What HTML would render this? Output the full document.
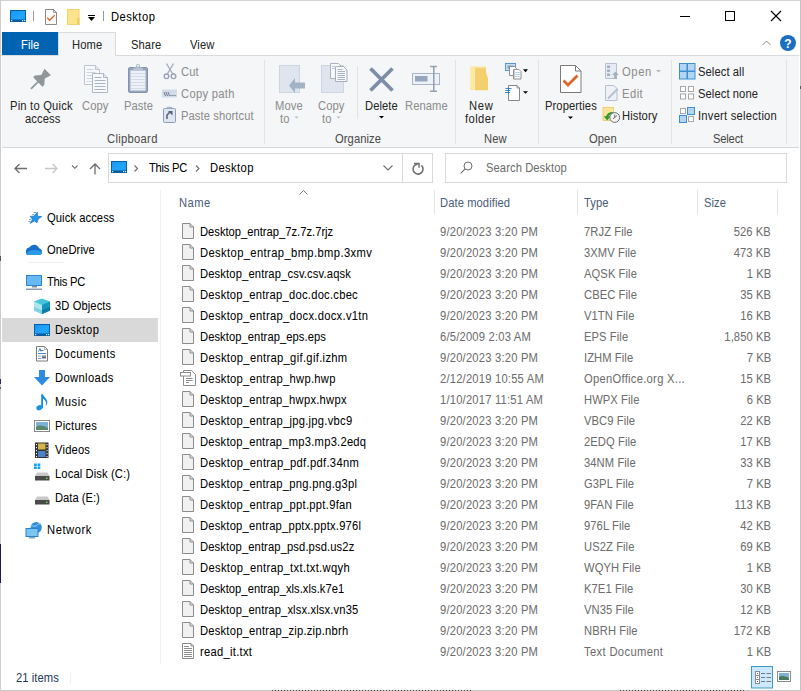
<!DOCTYPE html>
<html><head><meta charset="utf-8"><style>
*{margin:0;padding:0;box-sizing:border-box}
html,body{width:801px;height:691px;overflow:hidden;background:#fff}
body{position:relative;font-family:"Liberation Sans",sans-serif;font-size:12px;color:#000}
.a{position:absolute}
.t{position:absolute;white-space:nowrap;line-height:14px;letter-spacing:0.086px;transform:scaleX(0.933);transform-origin:0 0;-webkit-text-stroke:0.04px currentColor}
.t.r{transform-origin:100% 0}
.sep{position:absolute;width:1px;background:#e2e3e4}
</style></head><body>
<div class="a" style="left:0;top:0;width:801px;height:1px;background:#d3d3d3"></div>
<div class="a" style="left:0;top:0;width:1px;height:691px;background:#cdcdcd"></div>
<div class="a" style="left:800px;top:0;width:1px;height:691px;background:#c4c4c4"></div>
<div class="a" style="left:0;top:690px;width:801px;height:1px;background:#c8c8c8"></div>
<div class="a" style="left:2px;top:55px;width:797px;height:1px;background:#dadbdc"></div>
<div class="a" style="left:2px;top:32px;width:56px;height:23px;background:#0063b1"></div>
<div class="a" style="left:58px;top:32px;width:58px;height:24px;background:#f5f6f7;border:1px solid #dadbdc;border-bottom:none"></div>
<div class="a" style="left:2px;top:56px;width:797px;height:91px;background:#f5f6f7"></div>
<div class="a" style="left:2px;top:147px;width:797px;height:1px;background:#d5d6d7"></div>
<div class="sep" style="left:264px;top:60px;height:84px"></div>
<div class="sep" style="left:455px;top:60px;height:84px"></div>
<div class="sep" style="left:538px;top:60px;height:84px"></div>
<div class="sep" style="left:671px;top:60px;height:84px"></div>
<div class="sep" style="left:786px;top:60px;height:84px"></div>
<div class="sep" style="left:357px;top:66px;height:53px"></div>
<div class="a" style="left:108px;top:153px;width:325px;height:30px;border:1px solid #d9d9d9"></div>
<div class="a" style="left:402px;top:154px;width:1px;height:28px;background:#d9d9d9"></div>
<div class="a" style="left:445px;top:153px;width:342px;height:30px;border:1px solid #d9d9d9"></div>
<div class="a" style="left:160px;top:190px;width:1px;height:474px;background:#f0f0f0"></div>
<div class="a" style="left:2px;top:318px;width:156px;height:24px;background:#d9d9d9"></div>
<div class="sep" style="left:434px;top:190px;height:24px;background:#e5e5e5"></div>
<div class="sep" style="left:577px;top:190px;height:24px;background:#e5e5e5"></div>
<div class="sep" style="left:697px;top:190px;height:24px;background:#e5e5e5"></div>
<div class="sep" style="left:777px;top:190px;height:24px;background:#e5e5e5"></div>
<div class="sep" style="left:70px;top:672px;height:12px;background:#f0f0f0"></div>
<div class="a" style="left:0;top:256px;width:1px;height:5px;background:#555"></div>
<div class="a" style="left:0;top:379px;width:1px;height:5px;background:#2a2a6a"></div>
<div class="a" style="left:0;top:387px;width:1px;height:2px;background:#666"></div>
<div class="a" style="left:0;top:544px;width:1px;height:39px;background:#1c1c5a"></div>
<div class="a" style="left:800px;top:86px;width:1px;height:3px;background:#555"></div>
<div class="a" style="left:272px;top:690px;width:200px;height:1px;background:repeating-linear-gradient(90deg,#444 0 1px,#c8c8c8 1px 3px)"></div>
<div class="a" style="left:620px;top:690px;width:125px;height:1px;background:repeating-linear-gradient(90deg,#444 0 1px,#c8c8c8 1px 3px)"></div>
<div class="a" style="left:28px;top:262px;width:36px;height:1px;background:#f0f0f0"></div>
<svg class="a" style="left:0;top:0" width="801" height="691" viewBox="0 0 801 691">
<defs>
<linearGradient id="scr" x1="0" y1="0" x2="1" y2="1"><stop offset="0" stop-color="#1696ee"/><stop offset="0.6" stop-color="#22a6fc"/><stop offset="1" stop-color="#0d99fa"/></linearGradient>
<g id="pcico"><rect x="0.5" y="0.5" width="15" height="11" fill="url(#scr)" stroke="#0a5ea8" stroke-width="1"/><rect x="0.5" y="9.5" width="15" height="2" fill="#0b5a9e"/><rect x="1" y="10" width="1.2" height="1.2" fill="#c8ecff"/><rect x="12" y="10" width="1.2" height="1.2" fill="#c8ecff"/><rect x="14" y="10" width="1.2" height="1.2" fill="#c8ecff"/></g>
</defs>
<!-- title bar QAT -->
<use href="#pcico" x="10" y="10"/>
<rect x="33" y="11" width="1" height="10" fill="#9a9a9a"/>
<path d="M45.5 9.5h8l3 3v12h-11z" fill="#fafafa" stroke="#8a8a8a"/><path d="M53.5 9.5v3h3z" fill="#ddd" stroke="#8a8a8a" stroke-width="0.8"/><path d="M47.2 17.8l2.5 2.5 5-5.2" fill="none" stroke="#e0642a" stroke-width="1.3"/>
<rect x="67.5" y="9.5" width="11.5" height="15" fill="#fde38c" stroke="#f1d070"/><rect x="77" y="18" width="2.5" height="7" fill="#f0cd60"/>
<rect x="88" y="15" width="7" height="1" fill="#000"/><path d="M88 17h7l-3.5 4z" fill="#000"/>
<rect x="103" y="11" width="1" height="10" fill="#9a9a9a"/>
<!-- window controls -->
<rect x="680" y="16" width="10" height="1" fill="#000"/>
<rect x="725.5" y="11.5" width="9" height="9" fill="none" stroke="#000" stroke-width="1"/>
<path d="M771 11l10 10M781 11l-10 10" stroke="#000" stroke-width="1.1"/>
<!-- tab row right -->
<path d="M762.5 45l4-4 4 4" fill="none" stroke="#8a8a8a" stroke-width="1"/>
<circle cx="788" cy="43" r="8" fill="#1c6fc0"/>
<text x="788" y="47.5" font-family="Liberation Sans" font-weight="bold" font-size="12" fill="#fff" text-anchor="middle">?</text>
<!-- ribbon: pin -->
<g transform="translate(47.7,72.1) rotate(135)"><path d="M0-4.6V4.6L6.5 2.4 11.5 6.6 14 6.6V-6.6L11.5-6.6 6.5-2.4z" fill="#8f9799"/><path d="M13 0H23" stroke="#8f9799" stroke-width="1.7" stroke-linecap="round"/></g>
<!-- copy -->
<path d="M84.5 65.5h11l4 4v15h-15z" fill="#f7f9fc" stroke="#bcc4d1"/><path d="M95.5 65.5v4h4" fill="#e3e8f0" stroke="#bcc4d1"/>
<path d="M86.5 69.5h7M86.5 72.5h9M86.5 75.5h9M86.5 78.5h9M86.5 81.5h9" stroke="#cdd4df"/>
<path d="M92.5 73.5h11l4 4v15h-15z" fill="#f7f9fc" stroke="#aeb7c6"/><path d="M103.5 73.5v4h4" fill="#e3e8f0" stroke="#aeb7c6"/>
<path d="M94.5 77.5h7M94.5 80.5h11M94.5 83.5h11M94.5 86.5h11M94.5 89.5h11" stroke="#aab4c5"/>
<!-- paste -->
<rect x="128.5" y="67.5" width="19" height="25" rx="1.5" fill="#98a6bd" stroke="#8393ae"/>
<rect x="130.5" y="70.5" width="15" height="20" fill="#eef2f8"/>
<path d="M131 73.5h14M131 76.5h14M131 79.5h14M131 82.5h14M131 85.5h14M131 88.5h14" stroke="#d3dbe7"/>
<path d="M132.5 70.5l1.5-3h8l1.5 3z" fill="#b7c2d3"/><rect x="136" y="64" width="4" height="4" rx="1.5" fill="#b0bccd"/><rect x="137" y="65" width="2" height="1.5" fill="#eef2f8"/>
<!-- cut -->
<path d="M166.5 63.5l6.5 11M173.5 63.5l-6.5 11" stroke="#a0a9bc" stroke-width="1.3"/>
<circle cx="166.5" cy="76.3" r="2.3" fill="none" stroke="#9aa3b8" stroke-width="1.4"/><circle cx="173.5" cy="76.3" r="2.3" fill="none" stroke="#9aa3b8" stroke-width="1.4"/>
<!-- copy path -->
<rect x="162" y="89.5" width="15" height="8" fill="#d3dbea"/>
<path d="M164 92l1.5 4M166 92l1.5 4M168 92l1.5 4" stroke="#55607a" stroke-width="0.8"/><path d="M170.5 95.5h1M172.5 95.5h1M174.5 95.5h1" stroke="#55607a"/>
<!-- paste shortcut -->
<rect x="163.5" y="108.5" width="12" height="14" rx="1" fill="#dfe6f1" stroke="#8d9cb6"/>
<path d="M166 108.5l1.3-1.8h4.4l1.3 1.8" fill="#a8b5c9"/>
<path d="M167 119v-4l3.5-3.5" stroke="#55607a" stroke-width="1.5" fill="none"/><path d="M168 111h4.5v4.5z" fill="#55607a"/>
<!-- move to -->
<rect x="279.5" y="65.5" width="20" height="27" fill="#dfe5ee" stroke="#cdd5e1"/>
<path d="M289 85.5l6-7.5v4.5h10v6h-10v4.5z" fill="#a3b2c5"/>
<!-- copy to -->
<rect x="321.5" y="65.5" width="22" height="27" fill="#dfe5ee" stroke="#cdd5e1"/>
<path d="M330.5 63.5h8l3.5 3.5v11.5h-11.5z" fill="#f6f8fb" stroke="#aab3c3"/>
<path d="M335.5 66.5h8l3.5 3.5v11.5h-11.5z" fill="#f6f8fb" stroke="#a3aec0"/>
<path d="M337.5 69.5h5M337.5 71.5h7.5M337.5 73.5h7.5M337.5 75.5h7.5M337.5 77.5h7.5M337.5 79.5h7.5" stroke="#a9b4c5"/><path d="M332 66.5h5M332 68.5h3" stroke="#c0c8d4"/>
<!-- delete -->
<path d="M370.5 68.5l22 22M392.5 68.5l-22 22" stroke="#7d8ea8" stroke-width="3.8"/>
<!-- rename -->
<rect x="412.5" y="73.5" width="27" height="11" fill="#eef2f8" stroke="#a8b4c7"/>
<rect x="415" y="76" width="12.5" height="5.5" fill="#98a6bb"/>
<path d="M430 66.5h3l0.5 0.8 0.5-0.8h3M433.8 67v24M430 91.3h3l0.5-0.8 0.5 0.8h3" stroke="#96a3b4" stroke-width="1.6" fill="none"/>
<!-- new folder -->
<path d="M470 66.5h16v23.5h-16z" fill="#fbe39c"/>
<path d="M475 68.3l11 0v4l2 6v12h-13z" fill="#f3d06d"/>
<path d="M470 66.5l5 2v21.5l-5-1.5z" fill="#fde9a8"/>
<!-- new item -->
<rect x="505.5" y="63.5" width="10" height="7" fill="#c6dff3" stroke="#4a90cf" stroke-width="0.9"/>
<rect x="507.5" y="65.5" width="6" height="3" fill="#7aa3c0"/>
<path d="M509.5 66.5h5l2 2v7h-7z" fill="#fff" stroke="#858585" stroke-width="0.9"/>
<path d="M513.5 69.5h5.5l2 2v7.5h-7.5z" fill="#fff" stroke="#858585" stroke-width="0.9"/>
<path d="M515 72.5h5M515 74.5h5M515 76.5h5" stroke="#9fd0e6" stroke-width="0.8"/><path d="M514.5 70v8.5" stroke="#e2b5c5" stroke-width="0.8"/>
<path d="M523 69.2h5l-2.5 3z" fill="#000"/>
<!-- easy access -->
<path d="M508.5 85.5h8.5l2.5 2.5v12.5h-11z" fill="#fff" stroke="#7a7a7a" stroke-width="0.9"/>
<path d="M517 85.5v2.5h2.5" fill="none" stroke="#7a7a7a" stroke-width="0.8"/>
<path d="M505.5 88.5h6M505.3 90.5h5M505 92.5h5" stroke="#2a7bc7" stroke-width="0.9"/><path d="M508.5 87.5v6" stroke="#2a7bc7" stroke-width="0.8"/>
<path d="M523 91.2h5l-2.5 2.5z" fill="#000"/>
<!-- properties -->
<path d="M560.5 65.5h15l5.5 5.5v21.5h-20.5z" fill="#fff" stroke="#7a7a7a"/>
<path d="M575.5 65.5v5.5h5.5" fill="none" stroke="#7a7a7a"/>
<path d="M563.5 80.5l4.5 4.5 9.5-9.5" fill="none" stroke="#e0642a" stroke-width="2.8"/>
<path d="M568 116.5h5l-2.5 2.5z" fill="#000"/>
<!-- open -->
<path d="M605.5 63.5h11v15h-11z" fill="#e7ecf3" stroke="#b6c0cf"/>
<rect x="607" y="65.5" width="3" height="2.5" fill="#a5b1c3"/><rect x="607" y="69.5" width="3" height="2.5" fill="#a5b1c3"/><rect x="607" y="73.5" width="3" height="2.5" fill="#a5b1c3"/>
<path d="M612 75l3.5-3.5 3.5 3.5h-2v4h-3v-4z" fill="#a5b1c3"/>
<path d="M656 70h5l-2.5 2.5z" fill="#b8b8b8"/>
<!-- edit -->
<path d="M605.5 85.5h8.5l3 3v12h-11.5z" fill="#eef1f6" stroke="#b6c0cf"/>
<path d="M608 98.5l9.5-9.5" stroke="#b6c0cf" stroke-width="2"/>
<!-- history -->
<rect x="603" y="107.5" width="10.5" height="13" fill="#fbe39c" stroke="#e8c965" stroke-width="0.8"/>
<path d="M613 113.2C609.5 113 607.3 114.8 607.2 117.3" fill="none" stroke="#2e9a34" stroke-width="2.2"/><path d="M603.8 116.3h6.8l-3.4 4.2z" fill="#2e9a34"/>
<circle cx="614.7" cy="117.5" r="4.9" fill="#f3f3f3" stroke="#6d6d6d" stroke-width="1"/><path d="M614.7 114.5v3l-1.8 1.2M617 115.5l-2.3 2" stroke="#555" stroke-width="0.8" fill="none"/>
<!-- select all -->
<rect x="679.5" y="63.5" width="15.5" height="15.5" fill="#b4d5f2" stroke="#3a8fd6"/>
<path d="M687.25 63.5v15.5M679.5 71.25h15.5" stroke="#3a8fd6" stroke-width="1.5"/>
<!-- select none -->
<g fill="#fff" stroke="#a8a8a8"><rect x="680.5" y="86.5" width="5" height="5"/><rect x="688.5" y="86.5" width="5" height="5"/><rect x="680.5" y="94" width="5" height="5"/><rect x="688.5" y="94" width="5" height="5"/></g>
<!-- invert -->
<g fill="#fff" stroke="#a8a8a8"><rect x="680.5" y="108.5" width="5" height="5"/><rect x="688.5" y="116.5" width="5" height="5"/></g>
<g fill="#b4d5f2" stroke="#3a8fd6"><rect x="687.5" y="107.5" width="7" height="7"/><rect x="679.5" y="115.5" width="7" height="7"/></g>
<!-- dropdown arrows organize -->
<path d="M294.5 116.5h4l-2 2z" fill="#b8b8b8"/><path d="M336.5 116.5h4l-2 2z" fill="#b8b8b8"/>
<path d="M379 116h5l-2.5 2.5z" fill="#000"/>
<!-- address bar -->
<path d="M15 168.5h12M19.5 164l-4.5 4.5 4.5 4.5" fill="none" stroke="#6d6d6d" stroke-width="1.3"/>
<path d="M45 168.5h12M52.5 164l4.5 4.5-4.5 4.5" fill="none" stroke="#c8c8c8" stroke-width="1.3"/>
<path d="M72 165.5l2.8 2.8 2.8-2.8" fill="none" stroke="#6d6d6d" stroke-width="1.1"/>
<path d="M95 174.5v-10M90 169l5-5 5 5" fill="none" stroke="#6d6d6d" stroke-width="1.3"/>
<use href="#pcico" x="111" y="161"/>
<path d="M134.5 165.5l3 3-3 3" fill="none" stroke="#6d6d6d" stroke-width="1.1"/>
<path d="M196 165.5l3 3-3 3" fill="none" stroke="#6d6d6d" stroke-width="1.1"/>
<path d="M383.5 165.5l4.5 4.5 4.5-4.5" fill="none" stroke="#6d6d6d" stroke-width="1.1"/>
<path d="M421.4 165.4A5 5 0 1 1 417.6 164.1" fill="none" stroke="#707070" stroke-width="1.6"/><path d="M414 163.6H419V167.8" fill="none" stroke="#707070" stroke-width="1.5"/>
<circle cx="468" cy="166" r="4" fill="none" stroke="#6d6d6d" stroke-width="1"/><path d="M465.2 168.8l-4.5 4.5" stroke="#6d6d6d" stroke-width="1.1"/>
<!-- sort arrow -->
<path d="M299.5 194.5l4-4 4 4" fill="none" stroke="#7a7a7a" stroke-width="1"/>
<!-- nav icons -->
<path d="M37.3 212.3L37.6 216.3 41.7 216.6 38 219.3 37 222.8 34.4 220.9 30.2 223.4 32.5 219.3 30.1 216.4 34.2 216Z" fill="#2596e6" stroke="#1a74c4" stroke-width="0.7" stroke-linejoin="round"/>
<path d="M33.5 212.5h3M32.3 214.5h2M29.2 219.5h2M28.4 221.5h2" stroke="#4a90c8" stroke-width="0.8"/>
<path d="M27.8 255C26.3 255 25.9 253.5 25.9 251.8 25.9 249.2 27.4 247.4 29.6 247.3 30.6 245.6 32.3 244.7 34.2 244.7 36.6 244.7 38.4 246.2 39.1 248.3 40.8 248.6 42 250 42 251.9 42 253.8 41 255 39.3 255Z" fill="#1670c8"/>
<path d="M26.1 253C26.4 254.3 27 255 27.8 255H39.3C40.7 255 41.7 254.2 42 252.6 40.5 250.8 38 250 35 250 31.5 250 28.5 251.2 26.1 253Z" fill="#2d9ae8"/>
<rect x="26.5" y="275.5" width="15" height="10" fill="#66b9f3" stroke="#2f86cf"/><rect x="32" y="286" width="5" height="1.5" fill="#7a8da0"/><rect x="26" y="288.5" width="16" height="1.5" fill="#8c9cb0"/>
<path d="M42 298.5l-8 3v9l8 3.5 8-3.5v-9z" fill="#45c4dc"/><path d="M42 305l8-3.5v9L42 314z" fill="#1596bd"/><path d="M34 301.5l8 3.5v9l-8-3.5z" fill="#aee6f0"/><path d="M34 307l8 3v4l-8-3.5z" fill="#7ed3e4"/><path d="M42 310l8-3v3.5L42 314z" fill="#0e7ea6"/>
<use href="#pcico" x="34" y="324"/>
<path d="M36.5 346.5h8l3 3v11.5h-11z" fill="#fff" stroke="#7a7a7a"/><path d="M44.5 346.5v3h3" fill="none" stroke="#9a9a9a" stroke-width="0.8"/>
<path d="M38.5 351.5l1.5-3 1 3M40 350.5h3.5M38 353.5h8" stroke="#2a7bc7" stroke-width="0.9" fill="none"/><path d="M38 356h3.5M38 358.5h3.5" stroke="#8a9aaa" stroke-width="0.9"/><rect x="42" y="355.5" width="4" height="3" fill="#63727f"/><path d="M42 356.5h4" stroke="#9ab" stroke-width="0.6"/>
<path d="M39 370h6v7h5l-8 8.5-8-8.5h5z" fill="#2d8be0"/>
<rect x="41.2" y="394.2" width="1.8" height="13.5" fill="#1a88dc"/><ellipse cx="39.5" cy="407.7" rx="3.3" ry="2.5" transform="rotate(-20 39.5 407.7)" fill="#1d95e8"/><path d="M43 394.5C44 397 47.3 399 47.3 402.5 47.3 403.8 46.7 405 45.6 405.9 46 404.5 46.2 403 45.7 401.8 45 400 43.8 399.3 43 398.6Z" fill="#1a88dc"/>
<rect x="34.5" y="420.5" width="15" height="11" fill="#fff" stroke="#8a8a8a"/><rect x="36" y="422" width="12" height="8" fill="#7fb0d8"/><path d="M36 427c3-2 6-2 12 1v2h-12z" fill="#5a8a6e"/>
<rect x="35" y="442.5" width="13.5" height="15.5" fill="#333"/><rect x="38" y="443.5" width="7.5" height="6" fill="#d6b54a"/><rect x="38" y="451" width="7.5" height="6" fill="#4b82c8"/>
<g fill="#fff"><rect x="36" y="444" width="1" height="1.2"/><rect x="36" y="447" width="1" height="1.2"/><rect x="36" y="450" width="1" height="1.2"/><rect x="36" y="453" width="1" height="1.2"/><rect x="36" y="456" width="1" height="1.2"/><rect x="46.5" y="444" width="1" height="1.2"/><rect x="46.5" y="447" width="1" height="1.2"/><rect x="46.5" y="450" width="1" height="1.2"/><rect x="46.5" y="453" width="1" height="1.2"/><rect x="46.5" y="456" width="1" height="1.2"/></g>
<g fill="#17a2e6"><rect x="34" y="463.5" width="2.8" height="2.5"/><rect x="37.5" y="463.5" width="2.8" height="2.5"/><rect x="34" y="466.5" width="2.8" height="2.5"/><rect x="37.5" y="466.5" width="2.8" height="2.5"/></g>
<path d="M37 472.5h10.5l2 3.5h-14.5z" fill="#c8c8c8"/><rect x="35" y="476" width="14.5" height="4.5" fill="#4a4a4a"/><rect x="46" y="477.5" width="1.5" height="1.5" fill="#6fd36f"/>
<path d="M37 496.5h10.5l2 3.5h-14.5z" fill="#c8c8c8"/><rect x="35" y="500" width="14.5" height="4.5" fill="#4a4a4a"/><rect x="46" y="501.5" width="1.5" height="1.5" fill="#6fd36f"/>
<circle cx="36.2" cy="527.5" r="5.6" fill="#2f8fdc"/><path d="M31 526c2-1 3 1 5 0s2-3 4-2" stroke="#9fd3f5" stroke-width="1" fill="none"/>
<rect x="26" y="528.5" width="12" height="8" fill="#7cc5f3" stroke="#2a82cf"/><rect x="29" y="537" width="6" height="1.5" fill="#8aa"/>
<path d="M182.5 223.5h7.5l3.5 3.5v11.5h-11z" fill="#f1f1f1" stroke="#8c8c8c"/><path d="M190 223.5v3.5h3.5" fill="none" stroke="#8c8c8c"/>
<path d="M182.5 244.5h7.5l3.5 3.5v11.5h-11z" fill="#f1f1f1" stroke="#8c8c8c"/><path d="M190 244.5v3.5h3.5" fill="none" stroke="#8c8c8c"/>
<path d="M182.5 265.5h7.5l3.5 3.5v11.5h-11z" fill="#f1f1f1" stroke="#8c8c8c"/><path d="M190 265.5v3.5h3.5" fill="none" stroke="#8c8c8c"/>
<path d="M182.5 286.5h7.5l3.5 3.5v11.5h-11z" fill="#f1f1f1" stroke="#8c8c8c"/><path d="M190 286.5v3.5h3.5" fill="none" stroke="#8c8c8c"/>
<path d="M182.5 307.5h7.5l3.5 3.5v11.5h-11z" fill="#f1f1f1" stroke="#8c8c8c"/><path d="M190 307.5v3.5h3.5" fill="none" stroke="#8c8c8c"/>
<path d="M182.5 328.5h7.5l3.5 3.5v11.5h-11z" fill="#f1f1f1" stroke="#8c8c8c"/><path d="M190 328.5v3.5h3.5" fill="none" stroke="#8c8c8c"/>
<path d="M182.5 349.5h7.5l3.5 3.5v11.5h-11z" fill="#f1f1f1" stroke="#8c8c8c"/><path d="M190 349.5v3.5h3.5" fill="none" stroke="#8c8c8c"/>
<g transform="translate(0,147)"><path d="M183.5 223.5h8l4 4v11h-12z" fill="#fff" stroke="#8c8c8c"/><rect x="180.5" y="225.5" width="10" height="3.5" fill="#fff" stroke="#8c8c8c"/><path d="M186 231.5h6.5M186 233.5h6.5M186 235.5h3" stroke="#8c8c8c"/></g>
<path d="M182.5 391.5h7.5l3.5 3.5v11.5h-11z" fill="#f1f1f1" stroke="#8c8c8c"/><path d="M190 391.5v3.5h3.5" fill="none" stroke="#8c8c8c"/>
<path d="M182.5 412.5h7.5l3.5 3.5v11.5h-11z" fill="#f1f1f1" stroke="#8c8c8c"/><path d="M190 412.5v3.5h3.5" fill="none" stroke="#8c8c8c"/>
<path d="M182.5 433.5h7.5l3.5 3.5v11.5h-11z" fill="#f1f1f1" stroke="#8c8c8c"/><path d="M190 433.5v3.5h3.5" fill="none" stroke="#8c8c8c"/>
<path d="M182.5 454.5h7.5l3.5 3.5v11.5h-11z" fill="#f1f1f1" stroke="#8c8c8c"/><path d="M190 454.5v3.5h3.5" fill="none" stroke="#8c8c8c"/>
<path d="M182.5 475.5h7.5l3.5 3.5v11.5h-11z" fill="#f1f1f1" stroke="#8c8c8c"/><path d="M190 475.5v3.5h3.5" fill="none" stroke="#8c8c8c"/>
<path d="M182.5 496.5h7.5l3.5 3.5v11.5h-11z" fill="#f1f1f1" stroke="#8c8c8c"/><path d="M190 496.5v3.5h3.5" fill="none" stroke="#8c8c8c"/>
<path d="M182.5 517.5h7.5l3.5 3.5v11.5h-11z" fill="#f1f1f1" stroke="#8c8c8c"/><path d="M190 517.5v3.5h3.5" fill="none" stroke="#8c8c8c"/>
<path d="M182.5 538.5h7.5l3.5 3.5v11.5h-11z" fill="#f1f1f1" stroke="#8c8c8c"/><path d="M190 538.5v3.5h3.5" fill="none" stroke="#8c8c8c"/>
<path d="M182.5 559.5h7.5l3.5 3.5v11.5h-11z" fill="#f1f1f1" stroke="#8c8c8c"/><path d="M190 559.5v3.5h3.5" fill="none" stroke="#8c8c8c"/>
<path d="M182.5 580.5h7.5l3.5 3.5v11.5h-11z" fill="#f1f1f1" stroke="#8c8c8c"/><path d="M190 580.5v3.5h3.5" fill="none" stroke="#8c8c8c"/>
<path d="M182.5 601.5h7.5l3.5 3.5v11.5h-11z" fill="#f1f1f1" stroke="#8c8c8c"/><path d="M190 601.5v3.5h3.5" fill="none" stroke="#8c8c8c"/>
<path d="M182.5 622.5h7.5l3.5 3.5v11.5h-11z" fill="#f1f1f1" stroke="#8c8c8c"/><path d="M190 622.5v3.5h3.5" fill="none" stroke="#8c8c8c"/>
<g transform="translate(0,420)"><path d="M182.5 223.5h8.5l2.5 2.5v12.5h-11z" fill="#fff" stroke="#8c8c8c"/><path d="M191 223.5v2.5h2.5" fill="none" stroke="#8c8c8c"/><path d="M184 226.5h5M184 228.5h8M184 230.5h8M184 232.5h8M184 234.5h8M184 236.5h8" stroke="#8c8c8c"/></g>
<!-- status view buttons -->
<rect x="751.5" y="666.5" width="21" height="21.5" fill="#cce8ff" stroke="#3c9ac9"/>
<rect x="755.5" y="671.5" width="4" height="4" fill="#fff" stroke="#8a8a8a"/><rect x="755.5" y="675.5" width="4" height="4" fill="#fff" stroke="#8a8a8a"/><rect x="755.5" y="679.5" width="4" height="4" fill="#fff" stroke="#8a8a8a"/><rect x="757" y="673" width="1" height="1" fill="#555"/><rect x="757" y="677" width="1" height="1" fill="#777"/><rect x="757" y="681" width="1" height="1" fill="#8a3030"/>
<path d="M761 673.5h4M766.5 673.5h4.5M761 677.5h4M766.5 677.5h4.5M761 681.5h4M766.5 681.5h4.5" stroke="#7a7a7a" stroke-width="1.2"/>
<rect x="777.5" y="671.5" width="13" height="10" fill="#fff" stroke="#8a8a8a"/><rect x="779" y="673" width="10" height="7" fill="#7fb0d8"/><path d="M779 677c2-1.5 5-1.5 10 1v2h-10z" fill="#4d7a5a"/>
</svg>

<div class="t" style="left:111px;top:10px;color:#000;letter-spacing:0.5px">Desktop</div>
<div class="t" style="left:72px;top:38px;color:#262626;">Home</div>
<div class="t" style="left:131px;top:38px;color:#262626;">Share</div>
<div class="t" style="left:190px;top:38px;color:#262626;">View</div>
<div class="t" style="left:21px;top:38px;color:#fff;">File</div>
<div class="t" style="left:10px;top:99px;color:#262626;letter-spacing:0.22px">Pin to Quick</div>
<div class="t" style="left:25px;top:112px;color:#262626;">access</div>
<div class="t" style="left:82px;top:99px;color:#8d8d8d;">Copy</div>
<div class="t" style="left:124px;top:99px;color:#8d8d8d;">Paste</div>
<div class="t" style="left:181px;top:65px;color:#8d8d8d;">Cut</div>
<div class="t" style="left:181px;top:87px;color:#8d8d8d;letter-spacing:0.33px">Copy path</div>
<div class="t" style="left:181px;top:109px;color:#8d8d8d;">Paste shortcut</div>
<div class="t" style="left:107px;top:132px;color:#4a4a4a;letter-spacing:0.33px">Clipboard</div>
<div class="t" style="left:275px;top:99px;color:#8d8d8d;">Move</div>
<div class="t" style="left:280px;top:112px;color:#8d8d8d;">to</div>
<div class="t" style="left:318px;top:99px;color:#8d8d8d;">Copy</div>
<div class="t" style="left:322px;top:112px;color:#8d8d8d;">to</div>
<div class="t" style="left:365px;top:99px;color:#262626;">Delete</div>
<div class="t" style="left:405px;top:99px;color:#8d8d8d;">Rename</div>
<div class="t" style="left:335px;top:132px;color:#4a4a4a;">Organize</div>
<div class="t" style="left:469px;top:99px;color:#262626;letter-spacing:0.8px">New</div>
<div class="t" style="left:465px;top:112px;color:#262626;letter-spacing:0.45px">folder</div>
<div class="t" style="left:484px;top:132px;color:#4a4a4a;">New</div>
<div class="t" style="left:545px;top:99px;color:#262626;">Properties</div>
<div class="t" style="left:622px;top:65px;color:#8d8d8d;letter-spacing:0.7px">Open</div>
<div class="t" style="left:622px;top:87px;color:#8d8d8d;letter-spacing:0.5px">Edit</div>
<div class="t" style="left:622px;top:109px;color:#262626;">History</div>
<div class="t" style="left:589px;top:132px;color:#4a4a4a;">Open</div>
<div class="t" style="left:698px;top:65px;color:#262626;">Select all</div>
<div class="t" style="left:698px;top:87px;color:#262626;">Select none</div>
<div class="t" style="left:698px;top:109px;color:#262626;letter-spacing:0.25px">Invert selection</div>
<div class="t" style="left:713px;top:132px;color:#4a4a4a;letter-spacing:-0.2px">Select</div>
<div class="t" style="left:149px;top:161px;color:#000;letter-spacing:-0.28px">This PC</div>
<div class="t" style="left:210px;top:161px;color:#000;letter-spacing:0.42px">Desktop</div>
<div class="t" style="left:486px;top:161px;color:#6d6d6d;">Search Desktop</div>
<div class="t" style="left:179px;top:196px;color:#4c607a;letter-spacing:0.45px">Name</div>
<div class="t" style="left:440px;top:196px;color:#4c607a;">Date modified</div>
<div class="t" style="left:584px;top:196px;color:#4c607a;">Type</div>
<div class="t" style="left:704px;top:196px;color:#4c607a;">Size</div>
<div class="t" style="left:47px;top:211px;color:#000;">Quick access</div>
<div class="t" style="left:47px;top:243px;color:#000;">OneDrive</div>
<div class="t" style="left:47px;top:275px;color:#000;letter-spacing:-0.27px">This PC</div>
<div class="t" style="left:55px;top:299px;color:#000;">3D Objects</div>
<div class="t" style="left:55px;top:323px;color:#000;letter-spacing:0.5px">Desktop</div>
<div class="t" style="left:55px;top:347px;color:#000;letter-spacing:0.5px">Documents</div>
<div class="t" style="left:55px;top:371px;color:#000;letter-spacing:0.4px">Downloads</div>
<div class="t" style="left:55px;top:395px;color:#000;letter-spacing:0.55px">Music</div>
<div class="t" style="left:55px;top:419px;color:#000;letter-spacing:0.2px">Pictures</div>
<div class="t" style="left:55px;top:443px;color:#000;letter-spacing:0.2px">Videos</div>
<div class="t" style="left:55px;top:467px;color:#000;letter-spacing:0.12px">Local Disk (C:)</div>
<div class="t" style="left:55px;top:491px;color:#000;letter-spacing:0px">Data (E:)</div>
<div class="t" style="left:47px;top:523px;color:#000;letter-spacing:0.6px">Network</div>
<div class="t" style="left:16px;top:671px;color:#1e395b;">21 items</div>
<div class="t" style="left:200px;top:225px;color:#000;letter-spacing:0.001px">Desktop_entrap_7z.7z.7rjz</div>
<div class="t" style="left:440px;top:225px;color:#6d6d6d;letter-spacing:0.22px">9/20/2023 3:20 PM</div>
<div class="t" style="left:584px;top:225px;color:#6d6d6d;">7RJZ File</div>
<div class="t r" style="right:30px;top:225px;color:#6d6d6d;">526 KB</div>
<div class="t" style="left:200px;top:246px;color:#000;letter-spacing:0.412px">Desktop_entrap_bmp.bmp.3xmv</div>
<div class="t" style="left:440px;top:246px;color:#6d6d6d;letter-spacing:0.22px">9/20/2023 3:20 PM</div>
<div class="t" style="left:584px;top:246px;color:#6d6d6d;">3XMV File</div>
<div class="t r" style="right:30px;top:246px;color:#6d6d6d;">473 KB</div>
<div class="t" style="left:200px;top:267px;color:#000;letter-spacing:0.156px">Desktop_entrap_csv.csv.aqsk</div>
<div class="t" style="left:440px;top:267px;color:#6d6d6d;letter-spacing:0.22px">9/20/2023 3:20 PM</div>
<div class="t" style="left:584px;top:267px;color:#6d6d6d;">AQSK File</div>
<div class="t r" style="right:30px;top:267px;color:#6d6d6d;">1 KB</div>
<div class="t" style="left:200px;top:288px;color:#000;letter-spacing:0.267px">Desktop_entrap_doc.doc.cbec</div>
<div class="t" style="left:440px;top:288px;color:#6d6d6d;letter-spacing:0.22px">9/20/2023 3:20 PM</div>
<div class="t" style="left:584px;top:288px;color:#6d6d6d;">CBEC File</div>
<div class="t r" style="right:30px;top:288px;color:#6d6d6d;">35 KB</div>
<div class="t" style="left:200px;top:309px;color:#000;letter-spacing:0.304px">Desktop_entrap_docx.docx.v1tn</div>
<div class="t" style="left:440px;top:309px;color:#6d6d6d;letter-spacing:0.22px">9/20/2023 3:20 PM</div>
<div class="t" style="left:584px;top:309px;color:#6d6d6d;">V1TN File</div>
<div class="t r" style="right:30px;top:309px;color:#6d6d6d;">16 KB</div>
<div class="t" style="left:200px;top:330px;color:#000;letter-spacing:0.071px">Desktop_entrap_eps.eps</div>
<div class="t" style="left:440px;top:330px;color:#6d6d6d;letter-spacing:0.22px">6/5/2009 2:03 AM</div>
<div class="t" style="left:584px;top:330px;color:#6d6d6d;">EPS File</div>
<div class="t r" style="right:30px;top:330px;color:#6d6d6d;">1,850 KB</div>
<div class="t" style="left:200px;top:351px;color:#000;letter-spacing:0.346px">Desktop_entrap_gif.gif.izhm</div>
<div class="t" style="left:440px;top:351px;color:#6d6d6d;letter-spacing:0.22px">9/20/2023 3:20 PM</div>
<div class="t" style="left:584px;top:351px;color:#6d6d6d;">IZHM File</div>
<div class="t r" style="right:30px;top:351px;color:#6d6d6d;">7 KB</div>
<div class="t" style="left:200px;top:372px;color:#000;letter-spacing:0.305px">Desktop_entrap_hwp.hwp</div>
<div class="t" style="left:440px;top:372px;color:#6d6d6d;letter-spacing:0.22px">2/12/2019 10:55 AM</div>
<div class="t" style="left:584px;top:372px;color:#6d6d6d;letter-spacing:0.3px">OpenOffice.org X...</div>
<div class="t r" style="right:30px;top:372px;color:#6d6d6d;">15 KB</div>
<div class="t" style="left:200px;top:393px;color:#000;letter-spacing:0.272px">Desktop_entrap_hwpx.hwpx</div>
<div class="t" style="left:440px;top:393px;color:#6d6d6d;letter-spacing:0.22px">1/10/2017 11:51 AM</div>
<div class="t" style="left:584px;top:393px;color:#6d6d6d;">HWPX File</div>
<div class="t r" style="right:30px;top:393px;color:#6d6d6d;">6 KB</div>
<div class="t" style="left:200px;top:414px;color:#000;letter-spacing:0.296px">Desktop_entrap_jpg.jpg.vbc9</div>
<div class="t" style="left:440px;top:414px;color:#6d6d6d;letter-spacing:0.22px">9/20/2023 3:20 PM</div>
<div class="t" style="left:584px;top:414px;color:#6d6d6d;">VBC9 File</div>
<div class="t r" style="right:30px;top:414px;color:#6d6d6d;">22 KB</div>
<div class="t" style="left:200px;top:435px;color:#000;letter-spacing:0.251px">Desktop_entrap_mp3.mp3.2edq</div>
<div class="t" style="left:440px;top:435px;color:#6d6d6d;letter-spacing:0.22px">9/20/2023 3:20 PM</div>
<div class="t" style="left:584px;top:435px;color:#6d6d6d;">2EDQ File</div>
<div class="t r" style="right:30px;top:435px;color:#6d6d6d;">17 KB</div>
<div class="t" style="left:200px;top:456px;color:#000;letter-spacing:0.337px">Desktop_entrap_pdf.pdf.34nm</div>
<div class="t" style="left:440px;top:456px;color:#6d6d6d;letter-spacing:0.22px">9/20/2023 3:20 PM</div>
<div class="t" style="left:584px;top:456px;color:#6d6d6d;">34NM File</div>
<div class="t r" style="right:30px;top:456px;color:#6d6d6d;">33 KB</div>
<div class="t" style="left:200px;top:477px;color:#000;letter-spacing:0.288px">Desktop_entrap_png.png.g3pl</div>
<div class="t" style="left:440px;top:477px;color:#6d6d6d;letter-spacing:0.22px">9/20/2023 3:20 PM</div>
<div class="t" style="left:584px;top:477px;color:#6d6d6d;">G3PL File</div>
<div class="t r" style="right:30px;top:477px;color:#6d6d6d;">7 KB</div>
<div class="t" style="left:200px;top:498px;color:#000;letter-spacing:0.304px">Desktop_entrap_ppt.ppt.9fan</div>
<div class="t" style="left:440px;top:498px;color:#6d6d6d;letter-spacing:0.22px">9/20/2023 3:20 PM</div>
<div class="t" style="left:584px;top:498px;color:#6d6d6d;">9FAN File</div>
<div class="t r" style="right:30px;top:498px;color:#6d6d6d;">113 KB</div>
<div class="t" style="left:200px;top:519px;color:#000;letter-spacing:0.228px">Desktop_entrap_pptx.pptx.976l</div>
<div class="t" style="left:440px;top:519px;color:#6d6d6d;letter-spacing:0.22px">9/20/2023 3:20 PM</div>
<div class="t" style="left:584px;top:519px;color:#6d6d6d;">976L File</div>
<div class="t r" style="right:30px;top:519px;color:#6d6d6d;">42 KB</div>
<div class="t" style="left:200px;top:540px;color:#000;letter-spacing:0.123px">Desktop_entrap_psd.psd.us2z</div>
<div class="t" style="left:440px;top:540px;color:#6d6d6d;letter-spacing:0.22px">9/20/2023 3:20 PM</div>
<div class="t" style="left:584px;top:540px;color:#6d6d6d;">US2Z File</div>
<div class="t r" style="right:30px;top:540px;color:#6d6d6d;">69 KB</div>
<div class="t" style="left:200px;top:561px;color:#000;letter-spacing:0.346px">Desktop_entrap_txt.txt.wqyh</div>
<div class="t" style="left:440px;top:561px;color:#6d6d6d;letter-spacing:0.22px">9/20/2023 3:20 PM</div>
<div class="t" style="left:584px;top:561px;color:#6d6d6d;">WQYH File</div>
<div class="t r" style="right:30px;top:561px;color:#6d6d6d;">1 KB</div>
<div class="t" style="left:200px;top:582px;color:#000;letter-spacing:0.045px">Desktop_entrap_xls.xls.k7e1</div>
<div class="t" style="left:440px;top:582px;color:#6d6d6d;letter-spacing:0.22px">9/20/2023 3:20 PM</div>
<div class="t" style="left:584px;top:582px;color:#6d6d6d;">K7E1 File</div>
<div class="t r" style="right:30px;top:582px;color:#6d6d6d;">30 KB</div>
<div class="t" style="left:200px;top:603px;color:#000;letter-spacing:0.151px">Desktop_entrap_xlsx.xlsx.vn35</div>
<div class="t" style="left:440px;top:603px;color:#6d6d6d;letter-spacing:0.22px">9/20/2023 3:20 PM</div>
<div class="t" style="left:584px;top:603px;color:#6d6d6d;">VN35 File</div>
<div class="t r" style="right:30px;top:603px;color:#6d6d6d;">12 KB</div>
<div class="t" style="left:200px;top:624px;color:#000;letter-spacing:0.23px">Desktop_entrap_zip.zip.nbrh</div>
<div class="t" style="left:440px;top:624px;color:#6d6d6d;letter-spacing:0.22px">9/20/2023 3:20 PM</div>
<div class="t" style="left:584px;top:624px;color:#6d6d6d;">NBRH File</div>
<div class="t r" style="right:30px;top:624px;color:#6d6d6d;">172 KB</div>
<div class="t" style="left:200px;top:645px;color:#000;letter-spacing:0.3px">read_it.txt</div>
<div class="t" style="left:440px;top:645px;color:#6d6d6d;letter-spacing:0.22px">9/20/2023 3:20 PM</div>
<div class="t" style="left:584px;top:645px;color:#6d6d6d;letter-spacing:0.38px">Text Document</div>
<div class="t r" style="right:30px;top:645px;color:#6d6d6d;">1 KB</div>
</body></html>
